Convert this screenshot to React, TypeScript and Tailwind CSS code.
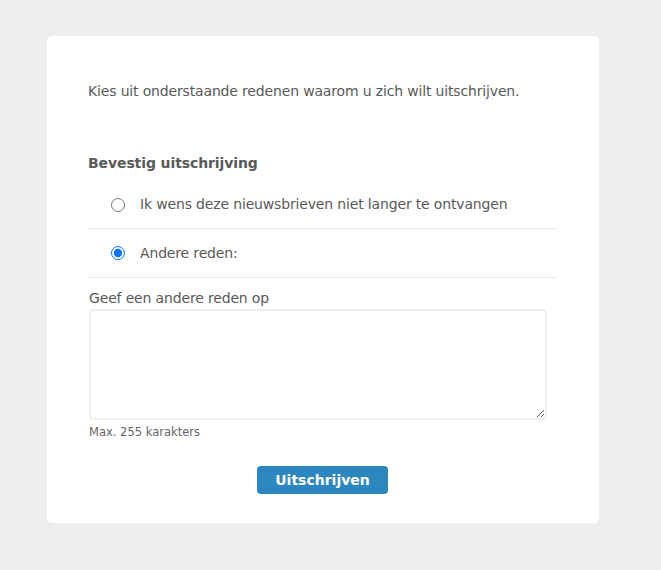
export default function App() {
  return (
    <div className="min-h-[570px] bg-[#eeeeee] pt-9 pl-[47px] font-['DejaVu_Sans',sans-serif] text-[#595959]">
      <div className="w-[552px] h-[487px] rounded-[5px] bg-white pl-[41px] pr-[42px] pt-[42px]">
        <p className="text-[14px] leading-[26px] tracking-[-0.16px]">Kies uit onderstaande redenen waarom u zich wilt uitschrijven.</p>

        <h2 className="mt-[46px] text-[14px] font-bold leading-[26px] tracking-[-0.1px]">Bevestig uitschrijving</h2>

        <div className="mt-[5px]">
          <label className="flex h-[48px] items-center gap-[15px] border-b border-[#e8e8e8] pl-[23px] text-[14px] tracking-[-0.16px]">
            <input type="radio" name="reden" className="h-[14px] w-[14px] accent-[#0a74ff]" />
            <span>Ik wens deze nieuwsbrieven niet langer te ontvangen</span>
          </label>
          <label className="flex h-[49px] items-center gap-[15px] border-b border-[#e8e8e8] pl-[23px] text-[14px] tracking-[-0.16px]">
            <input type="radio" name="reden" defaultChecked className="h-[14px] w-[14px] accent-[#0a74ff]" />
            <span>Andere reden:</span>
          </label>
        </div>

        <div className="pl-[1px] pt-[9px]">
          <div className="text-[14px] leading-[22px] tracking-[-0.16px]">Geef een andere reden op</div>
          <textarea className="block h-[111px] w-[458px] rounded-[4px] border-2 border-[#efefef] outline-none" />
          <div className="mt-[4px] text-[11.5px] leading-[16px] text-[#666666]">Max. 255 karakters</div>
        </div>

        <div className="mt-[26px] flex justify-center">
          <button className="h-[28px] w-[131px] rounded-[4px] bg-[#2b87bd] text-[14px] font-bold text-white">
            Uitschrijven
          </button>
        </div>
      </div>
    </div>
  );
}
